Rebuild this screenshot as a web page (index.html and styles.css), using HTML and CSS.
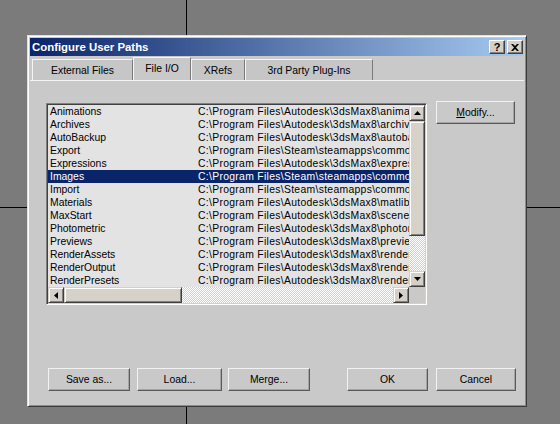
FILE: index.html
```html
<!DOCTYPE html>
<html>
<head>
<meta charset="utf-8">
<link rel="stylesheet" href="styles.css">
</head>
<body>
<div class="dialog">
  <div class="titlebar">
    <span class="title">Configure User Paths</span>
    <span class="title-btn help">?</span>
    <span class="title-btn close"><svg width="8" height="7" viewBox="0 0 8 7"><path d="M0 0h2l2 2 2-2h2L5 3.5 8 7H6L4 5 2 7H0l3-3.5z" fill="#000"/></svg></span>
  </div>
  <div class="tabs">
    <div class="tab tab-ext">External Files</div>
    <div class="tab tab-io active">File I/O</div>
    <div class="tab tab-xrefs">XRefs</div>
    <div class="tab tab-plug">3rd Party Plug-Ins</div>
  </div>
  <div class="panel">
    <div class="top-row">
      <div class="listbox">
        <div class="rows">
          <div class="row"><span class="name">Animations</span><span class="path">C:\Program Files\Autodesk\3dsMax8\animations</span></div>
          <div class="row"><span class="name">Archives</span><span class="path">C:\Program Files\Autodesk\3dsMax8\archives</span></div>
          <div class="row"><span class="name">AutoBackup</span><span class="path">C:\Program Files\Autodesk\3dsMax8\autoback</span></div>
          <div class="row"><span class="name">Export</span><span class="path">C:\Program Files\Steam\steamapps\common</span></div>
          <div class="row"><span class="name">Expressions</span><span class="path">C:\Program Files\Autodesk\3dsMax8\expressions</span></div>
          <div class="row selected"><span class="name">Images</span><span class="path">C:\Program Files\Steam\steamapps\common</span></div>
          <div class="row"><span class="name">Import</span><span class="path">C:\Program Files\Steam\steamapps\common</span></div>
          <div class="row"><span class="name">Materials</span><span class="path">C:\Program Files\Autodesk\3dsMax8\matlibs</span></div>
          <div class="row"><span class="name">MaxStart</span><span class="path">C:\Program Files\Autodesk\3dsMax8\scenes</span></div>
          <div class="row"><span class="name">Photometric</span><span class="path">C:\Program Files\Autodesk\3dsMax8\photometric</span></div>
          <div class="row"><span class="name">Previews</span><span class="path">C:\Program Files\Autodesk\3dsMax8\previews</span></div>
          <div class="row"><span class="name">RenderAssets</span><span class="path">C:\Program Files\Autodesk\3dsMax8\renderassets</span></div>
          <div class="row"><span class="name">RenderOutput</span><span class="path">C:\Program Files\Autodesk\3dsMax8\renderoutput</span></div>
          <div class="row"><span class="name">RenderPresets</span><span class="path">C:\Program Files\Autodesk\3dsMax8\renderpresets</span></div>
        </div>
        <div class="vscroll">
          <div class="sb-btn"><svg width="7" height="4" viewBox="0 0 7 4"><path d="M3.5 0L7 4H0z" fill="#000"/></svg></div>
          <div class="sb-thumb v-thumb"></div>
          <div class="sb-track"></div>
          <div class="sb-btn"><svg width="7" height="4" viewBox="0 0 7 4"><path d="M0 0h7L3.5 4z" fill="#000"/></svg></div>
        </div>
        <div class="hscroll">
          <div class="sb-btn"><svg width="4" height="7" viewBox="0 0 4 7"><path d="M0 3.5L4 0v7z" fill="#000"/></svg></div>
          <div class="sb-thumb h-thumb"></div>
          <div class="sb-track"></div>
          <div class="sb-btn"><svg width="4" height="7" viewBox="0 0 4 7"><path d="M0 0l4 3.5L0 7z" fill="#000"/></svg></div>
        </div>
        <div class="corner"></div>
      </div>
      <div class="btn btn-modify"><span><u>M</u>odify...</span></div>
    </div>
    <div class="bottom-row">
      <div class="btn btn-save">Save as...</div>
      <div class="btn btn-load">Load...</div>
      <div class="btn btn-merge">Merge...</div>
      <div class="btn btn-ok">OK</div>
      <div class="btn btn-cancel">Cancel</div>
    </div>
  </div>
</div>
</body>
</html>
```
FILE: styles.css
```css
html, body {
  margin: 0;
  padding: 0;
}
body {
  width: 560px;
  height: 424px;
  overflow: hidden;
  font-family: "Liberation Sans", Arial, sans-serif;
  font-size: 10.4px;
  color: #000;
  background:
    linear-gradient(#000, #000) 186px 0 / 1px 100% no-repeat,
    linear-gradient(#000, #000) 0 207px / 100% 1px no-repeat,
    #7b7b7b;
}
.dialog {
  position: absolute;
  left: 27px;
  top: 35px;
  width: 500px;
  height: 372px;
  box-sizing: border-box;
  border: 1px solid;
  border-color: #e0e0e0 #3c3c3c #3c3c3c #e0e0e0;
  box-shadow: inset 1px 1px #ffffff, inset -1px -1px #8a8a8a;
  padding: 2px;
  background: #c9c9c9;
  display: flex;
  flex-direction: column;
}
.titlebar {
  height: 18px;
  flex: none;
  display: flex;
  align-items: center;
  padding: 0 1px 0 2px;
  background: linear-gradient(to right, #0a246a, #a6caf0);
  color: #fff;
  font-weight: bold;
  font-size: 11.4px;
}
.title {
  flex: 1;
}
.title-btn {
  width: 16px;
  height: 14px;
  box-sizing: border-box;
  display: flex;
  align-items: center;
  justify-content: center;
  background: #d4d0c8;
  border: 1px solid;
  border-color: #ffffff #404040 #404040 #ffffff;
  box-shadow: inset -1px -1px #808080;
  color: #000;
  font-size: 11px;
  font-weight: bold;
  line-height: 12px;
}
.help {
  margin-right: 2px;
}
.tabs {
  height: 24px;
  flex: none;
  display: flex;
  align-items: flex-end;
  padding-left: 2px;
}
.tab {
  height: 21px;
  box-sizing: border-box;
  display: flex;
  align-items: center;
  justify-content: center;
  border-top: 1px solid #f4f4f4;
  border-left: 1px solid #f4f4f4;
  border-right: 1px solid #7a7a7a;
  background: #c6c6c6;
}
.tab.active {
  height: 23px;
  background: #c9c9c9;
  padding-bottom: 2px;
}
.tab-ext { width: 101px; }
.tab-io { width: 58px; }
.tab-xrefs { width: 54px; }
.tab-plug { width: 128px; }
.panel {
  flex: 1;
  display: flex;
  flex-direction: column;
  border-top: 1px solid #f4f4f4;
  padding: 20px 0 13px 16px;
}
.top-row {
  display: flex;
  align-items: flex-start;
}
.listbox {
  margin-top: 2px;
  width: 381px;
  height: 202px;
  box-sizing: border-box;
  border: 1px solid;
  border-color: #808080 #ffffff #ffffff #808080;
  box-shadow: inset 1px 1px #404040, inset -1px -1px #d4d0c8;
  padding: 1px;
  background: #e3e3e3;
  display: grid;
  grid-template-columns: 361px 16px;
  grid-template-rows: 182px 16px;
}
.rows {
  overflow: hidden;
}
.row {
  height: 13px;
  line-height: 13px;
  display: flex;
  white-space: nowrap;
}
.row.selected {
  background: #0a246a;
  color: #fff;
}
.name {
  flex: none;
  width: 148px;
  padding-left: 2px;
}
.path {
  flex: none;
  letter-spacing: 0.3px;
}
.vscroll {
  display: flex;
  flex-direction: column;
}
.hscroll {
  display: flex;
}
.sb-btn {
  width: 16px;
  height: 16px;
  flex: none;
  box-sizing: border-box;
  display: flex;
  align-items: center;
  justify-content: center;
  background: #d4d0c8;
  border: 1px solid;
  border-color: #d4d0c8 #404040 #404040 #d4d0c8;
  box-shadow: inset 1px 1px #ffffff, inset -1px -1px #808080;
}
.sb-thumb {
  flex: none;
  box-sizing: border-box;
  background: #d6d2ca;
  border: 1px solid;
  border-color: #d4d0c8 #404040 #404040 #d4d0c8;
  box-shadow: inset 1px 1px #ffffff, inset -1px -1px #808080;
}
.v-thumb {
  height: 115px;
}
.h-thumb {
  width: 118px;
}
.sb-track {
  flex: 1;
  background: repeating-conic-gradient(#ffffff 0 25%, #cfcfcf 0 50%) 0 0 / 2px 2px;
}
.corner {
  background: #c9c9c9;
}
.btn {
  height: 23px;
  box-sizing: border-box;
  display: flex;
  align-items: center;
  justify-content: center;
  border: 1px solid;
  border-color: #f2f2f2 #5a5a5a #5a5a5a #f2f2f2;
  box-shadow: inset -1px -1px #a4a4a4;
  background: #c9c9c9;
}
.btn-modify {
  width: 79px;
  margin-left: 9px;
}
.bottom-row {
  margin-top: auto;
  display: flex;
  padding-left: 2px;
}
.btn-save { width: 82px; }
.btn-load { width: 85px; margin-left: 7px; }
.btn-merge { width: 82px; margin-left: 6px; }
.btn-ok { width: 81px; margin-left: 37px; }
.btn-cancel { width: 80px; margin-left: 8px; }
```
